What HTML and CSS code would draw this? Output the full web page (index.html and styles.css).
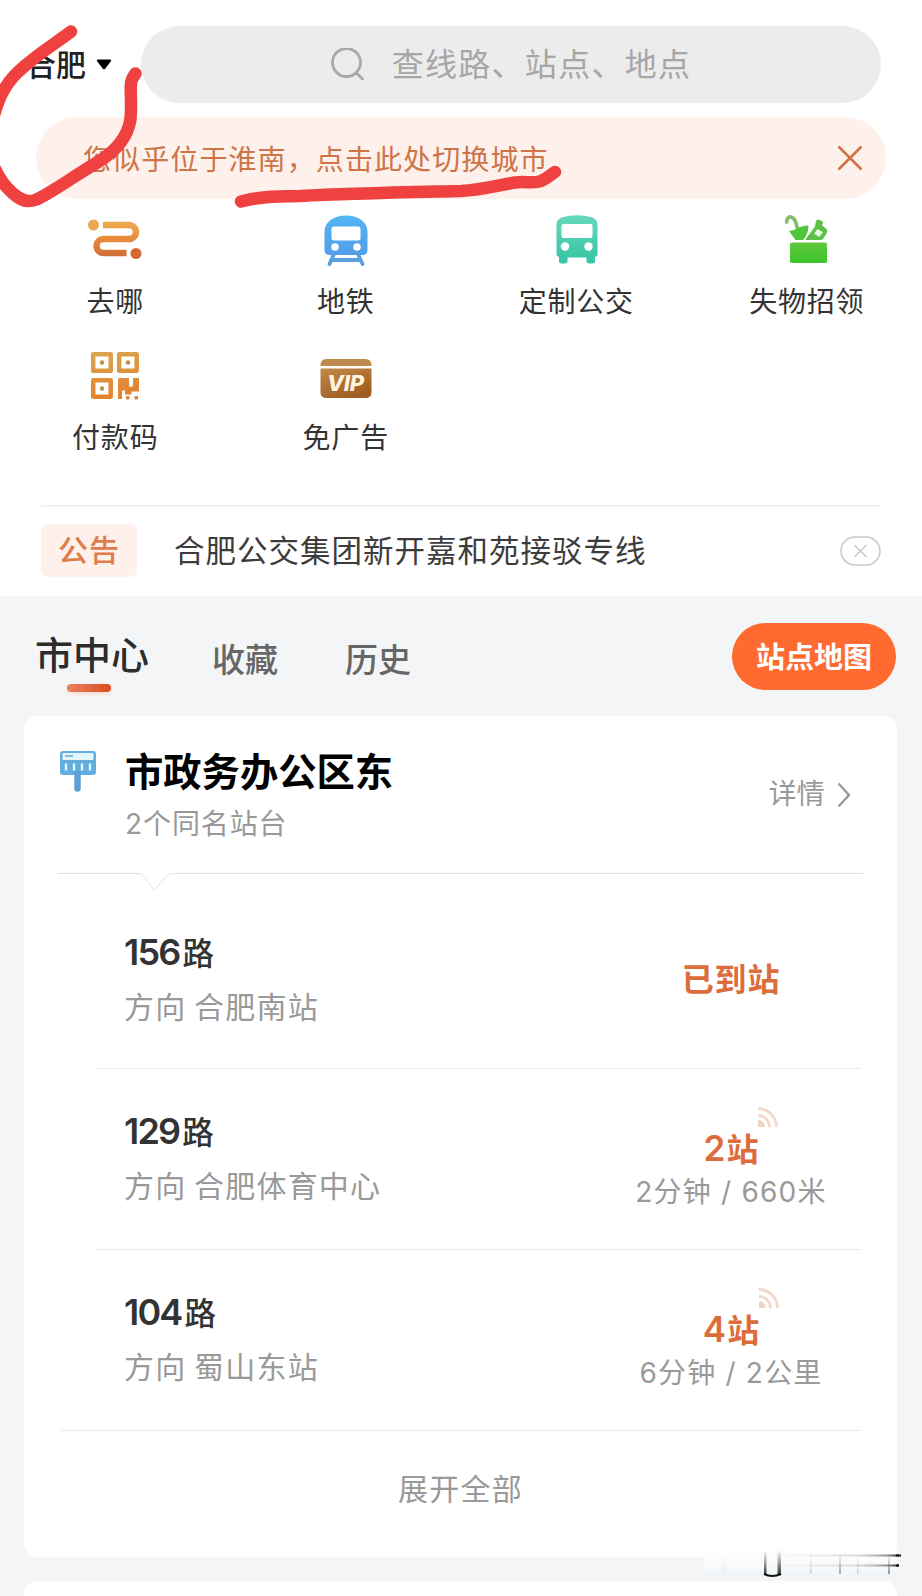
FILE: index.html
```html
<!DOCTYPE html>
<html lang="zh-CN">
<head>
  <meta charset="UTF-8">
  <meta name="viewport" content="width=device-width, initial-scale=1.0">
  <title>合肥公交</title>
  <link rel="stylesheet" href="styles.css">
</head>
<body>
  <div class="top">
    <header class="header">
      <div class="city">合肥 <svg width="16" height="11" viewBox="0 0 16 11"><path d="M2 0.5h12q2 0 .8 1.700L9.200 9.700q-1.200 1.300-2.400 0L1.200 2.200Q0 .5 2 .5z" fill="#000"/></svg></div>
      <div class="search">
        <svg width="34" height="34" viewBox="0 0 34 34" fill="none" stroke="#a9a9a9" stroke-width="2.800"><circle cx="15.500" cy="14.500" r="14"/><path d="M25 24.500l6.500 6.500" stroke-linecap="round"/></svg>
        <span>查线路、站点、地点</span>
      </div>
    </header>

    <div class="location-tip">
      <span>您似乎位于淮南，点击此处切换城市</span>
      <svg width="26" height="26" viewBox="0 0 26 26" fill="none" stroke="#cf7347" stroke-width="2.600"><path d="M1.500 1.500l23 23M24.500 1.500l-23 23"/></svg>
    </div>

    <nav class="menu">
      <a class="menu-item">
        <svg class="menu-icon" viewBox="0 0 54 54">
          <defs><linearGradient id="route" x1="0" y1="6" x2="0" y2="44" gradientUnits="userSpaceOnUse"><stop offset="0" stop-color="#edb050"/><stop offset=".5" stop-color="#e98a3c"/><stop offset="1" stop-color="#cf6a38"/></linearGradient></defs>
          <circle cx="5.500" cy="11" r="5.500" fill="#eba951"/>
          <path d="M15 11h26a7 7 0 0 1 0 14H15.500a7 7 0 0 0 0 14H38.500" fill="none" stroke="url(#route)" stroke-width="6.500"/>
          <circle cx="48" cy="39.500" r="5.500" fill="#d76832"/>
        </svg>
        <span>去哪</span>
      </a>
      <a class="menu-item">
        <svg class="menu-icon" viewBox="0 0 54 54">
          <defs><linearGradient id="metro" x1="0" y1="0" x2="0" y2="1"><stop offset="0" stop-color="#52b5f2"/><stop offset="1" stop-color="#529ee8"/></linearGradient></defs>
          <path d="M5.500 17C6 7 16 1.500 27 1.500S48 7 48.500 17v19q0 5-5 5h-33q-5 0-5-5z" fill="url(#metro)"/>
          <rect x="12.500" y="12.500" width="29" height="14" rx="2.500" fill="#fff"/>
          <circle cx="16" cy="33" r="3.800" fill="#fff"/><circle cx="38" cy="33" r="3.800" fill="#fff"/>
          <path d="M15 40l-4.500 10M39 40l4.500 10M13 46h28" stroke="#5a9fdf" stroke-width="3.800" fill="none" stroke-linecap="round"/>
        </svg>
        <span>地铁</span>
      </a>
      <a class="menu-item">
        <svg class="menu-icon" viewBox="0 0 54 54">
          <defs><linearGradient id="bus" x1="0" y1="0" x2="0" y2="1"><stop offset="0" stop-color="#66d9bd"/><stop offset="1" stop-color="#34c4a4"/></linearGradient></defs>
          <path d="M7.500 9q1-4 5-5.500Q28-1 43.500 3.500 47.500 5 48.500 9v31q0 2.500-2.500 3v4q0 2.500-2.500 2.500h-3q-3 0-3-2.500v-3.500h-19V47q0 2.500-3 2.500h-3Q10 49.500 10 47v-4q-2.500-.500-2.500-3z" fill="url(#bus)"/>
          <rect x="12.500" y="10" width="31" height="14" rx="2" fill="#fff"/>
          <circle cx="16" cy="32.500" r="4.200" fill="#fff"/><circle cx="39.500" cy="32.500" r="4.200" fill="#fff"/>
        </svg>
        <span>定制公交</span>
      </a>
      <a class="menu-item">
        <svg class="menu-icon" viewBox="0 0 54 54">
          <defs><linearGradient id="box" x1="0" y1="0" x2="0" y2="1"><stop offset="0" stop-color="#62c83c"/><stop offset="1" stop-color="#3bc42b"/></linearGradient></defs>
          <path d="M7 9.500C5.500 4 10 1.500 13 4c3 2.500 3.500 6 4.500 11" fill="none" stroke="#83bd6b" stroke-width="3.600"/>
          <path d="M9 17q5 0 9-3 4-2.500 10.500-2.500Q28.500 20 23 26h-7.500z" fill="#51c53a"/>
          <path d="M25 26l10-13.500 1-5.500q1-2 3-1.300l3 1.200q1.500.8.800 2.600l-.8 2 4 3q2 2 .5 5l-3.500 5.500q-1 1-2.500 1z" fill="#5cc246"/>
          <path d="M37.500 15l5.500 3.200-3.800 4.800-5-3.200z" fill="#e6f8df"/>
          <rect x="10" y="28.500" width="37" height="20.500" rx="2" fill="url(#box)"/>
        </svg>
        <span>失物招领</span>
      </a>
      <a class="menu-item">
        <svg class="menu-icon" viewBox="0 0 54 54">
          <defs><linearGradient id="qr" x1="0" y1="3" x2="10" y2="51" gradientUnits="userSpaceOnUse"><stop offset="0" stop-color="#d8a64e"/><stop offset="1" stop-color="#e5812f"/></linearGradient></defs>
          <g fill="none" stroke="url(#qr)" stroke-width="4.500" stroke-linejoin="round"><rect x="5.200" y="4.200" width="17.500" height="16.500"/><rect x="31.200" y="4.200" width="17.500" height="16.500"/><rect x="5.200" y="30.200" width="17.500" height="16.500"/></g>
          <g fill="#c39146"><circle cx="14" cy="12.500" r="2.300"/><circle cx="40" cy="12.500" r="2.300"/><circle cx="14" cy="38.500" r="2.300"/></g>
          <path d="M31 28h10v7q0 2 2 2t2-2v-7h6v13.500h-7.500v3H37v-4h-3V49h-4V30q0-2 1-2z" fill="url(#qr)"/>
          <path d="M38 46h3.500v3.500H38zM46.500 46H50v3.500h-3.500z" fill="#dc8a3d"/>
        </svg>
        <span>付款码</span>
      </a>
      <a class="menu-item">
        <svg class="menu-icon" viewBox="0 0 54 54">
          <defs><linearGradient id="vip" x1="0" y1="0" x2=".6" y2="1"><stop offset="0" stop-color="#c18a48"/><stop offset="1" stop-color="#a05c22"/></linearGradient></defs>
          <path d="M1.500 16V15q0-6 6-6h39q6 0 6 6v1z" fill="#bf8b4c"/>
          <path d="M1.500 18.500h51V42q0 6-6 6h-39q-6 0-6-6z" fill="url(#vip)"/>
          <text x="27" y="41" text-anchor="middle" textLength="38" class="vip-text">VIP</text>
        </svg>
        <span>免广告</span>
      </a>
    </nav>

    <div class="notice">
      <span class="notice-tag">公告</span>
      <span class="notice-text">合肥公交集团新开嘉和苑接驳专线</span>
      <svg width="41" height="30" viewBox="0 0 41 30" fill="none" stroke="#c9c9c9" stroke-width="1.500"><rect x="1" y="1" width="39" height="28" rx="14"/><path d="M14.500 9l12 12M26.500 9l-12 12"/></svg>
    </div>
  </div>

  <div class="tabs">
    <a class="tab active">市中心</a>
    <a class="tab">收藏</a>
    <a class="tab">历史</a>
    <button class="map-btn">站点地图</button>
  </div>

  <section class="card">
    <div class="station">
      <svg class="station-icon" width="38" height="42" viewBox="0 0 38 42">
        <rect x="1" y="1" width="36" height="24" rx="3" fill="#63aee0"/>
        <rect x="3.500" y="3" width="31" height="7" rx="1" fill="#e4f6fd"/>
        <path d="M6 6h8" stroke="#80bbe0" stroke-width="2"/>
        <path d="M7 13.500v7M15 13.500v7M23 13.500v7M31 13.500v7" stroke="#e4f6fd" stroke-width="2.400"/>
        <path d="M18.500 24v14.500" stroke="#609fd5" stroke-width="6.500" stroke-linecap="round"/>
      </svg>
      <div class="station-info">
        <h2>市政务办公区东</h2>
        <p>2个同名站台</p>
      </div>
      <a class="detail">详情 <svg width="14" height="26" viewBox="0 0 14 26" fill="none" stroke="#999" stroke-width="2.400"><path d="M1.500 1.500L12 13 1.500 24.500"/></svg></a>
    </div>
    <svg class="notch-line" width="805" height="20" viewBox="0 0 805 20" fill="none" stroke="#dfdfe1" stroke-width="1.200"><path d="M0 1.500h80M116 1.500h689"/><path d="M80 1.500q4 0 6 3l10.500 13.500L108 4.500q3-3 8-3" stroke="#ececee"/></svg>

    <div class="line">
      <div class="line-info">
        <h3><b>156</b>路</h3>
        <p>方向 合肥南站</p>
      </div>
      <div class="arrival"><strong class="arrived">已到站</strong></div>
    </div>
    <div class="line">
      <div class="line-info">
        <h3><b>129</b>路</h3>
        <p>方向 合肥体育中心</p>
      </div>
      <div class="arrival">
        <strong><b>2</b>站<svg class="signal" viewBox="0 0 20 20"><path d="M0 13a7 7 0 0 1 7 7H0z" fill="#f2d0c2"/><path d="M0 8.500A11.500 11.500 0 0 1 11.500 20M0 1.500A18.500 18.500 0 0 1 18.500 20" fill="none" stroke="#f2d8cc" stroke-width="2.800"/></svg></strong>
        <p>2分钟 / 660米</p>
      </div>
    </div>
    <div class="line">
      <div class="line-info">
        <h3><b>104</b>路</h3>
        <p>方向 蜀山东站</p>
      </div>
      <div class="arrival">
        <strong><b>4</b>站<svg class="signal" viewBox="0 0 20 20"><path d="M0 13a7 7 0 0 1 7 7H0z" fill="#f2d0c2"/><path d="M0 8.500A11.500 11.500 0 0 1 11.500 20M0 1.500A18.500 18.500 0 0 1 18.500 20" fill="none" stroke="#f2d8cc" stroke-width="2.800"/></svg></strong>
        <p>6分钟 / 2公里</p>
      </div>
    </div>
    <a class="expand">展开全部</a>
  </section>

  <section class="next-card"></section>

  <!-- red pen marks over the header -->
  <svg class="marks" width="922" height="220" viewBox="0 0 922 220" fill="none" stroke="#ee4140" stroke-width="12.500" stroke-linecap="round" stroke-linejoin="round">
    <path d="M71 31.500C55 44 31 58 14 76C4 87-1 98-6 115C-16 150-8 168 4 184C14 196 24 204 35 200C48 195 74 176 98 162C116 151 128 136 130.500 119C132 104 130 91 131 84C131 80 133 77 135.500 73.500"/>
    <path d="M241 201.500C258 197 272 196.500 300 196C350 193.500 400 192.500 461 191C480 190 500 185 515 182.500C526 181 533 184 541 181C548 178 550 175 555 172"/>
  </svg>

  <!-- smeared corner mark -->
  <svg class="smear" width="200" height="32" viewBox="0 0 200 32">
    <defs>
      <linearGradient id="fadeX"><stop offset="0" stop-color="#ccc" stop-opacity="0"/><stop offset=".7" stop-color="#aaa" stop-opacity=".4"/><stop offset=".92" stop-color="#777" stop-opacity=".8"/><stop offset="1" stop-color="#222"/></linearGradient>
      <linearGradient id="fadeY" x1="0" y1="0" x2="0" y2="1"><stop offset="0" stop-color="#555" stop-opacity="0"/><stop offset="1" stop-color="#333"/></linearGradient>
      <linearGradient id="haze" x1="0" y1="0" x2="0" y2="1"><stop offset="0" stop-color="#fefefe"/><stop offset="1" stop-color="#f1f5f8"/></linearGradient>
    </defs>
    <rect x="0" y="3" width="193" height="26" fill="url(#haze)"/>
    <rect x="58" y="6.500" width="137" height="2" fill="url(#fadeX)"/><rect x="58" y="16.500" width="137" height="2" fill="url(#fadeX)"/>
    <rect x="60" y="2" width="2.500" height="25" fill="url(#fadeY)"/><rect x="73.500" y="2" width="3.500" height="25" fill="url(#fadeY)"/>
    <path d="M60 26q8 4 17 0" fill="none" stroke="#111" stroke-width="2.200"/>
    <g fill="url(#fadeY)"><rect x="106" y="4" width="1.500" height="22" opacity=".2"/><rect x="135" y="4" width="2" height="22" opacity=".4"/><rect x="153" y="4" width="1.500" height="22" opacity=".2"/><rect x="184" y="4" width="2" height="22" opacity=".5"/><rect x="19" y="4" width="2" height="22" opacity=".06"/></g>
    <rect x="192" y="6.500" width="5" height="2" fill="#111"/><rect x="192" y="16.200" width="3" height="2.500" rx="1" fill="#111"/>
  </svg>
</body>
</html>
```

FILE: styles.css
```css
* {
  box-sizing: border-box;
}
body {
  position: relative;
  margin: 0;
  height: 1596px;
  overflow: hidden;
  background-color: #f3f5f7;
  color: #333;
  font-family: Inter, "Noto Sans CJK SC", sans-serif;
  line-height: 1.2;
}
h2, h3, p {
  margin: 0;
}
svg {
  display: block;
  flex: none;
}
.top {
  height: 596px;
  padding-top: 26px;
  background-color: #fff;
}
.header {
  display: flex;
  align-items: center;
  height: 77px;
  padding-left: 26px;
}
.city {
  display: flex;
  align-items: center;
  gap: 10px;
  width: 115px;
  font-size: 30px;
  font-weight: 500;
  color: #222;
}
.search {
  display: flex;
  align-items: center;
  justify-content: center;
  gap: 27px;
  width: 740px;
  height: 77px;
  border-radius: 39px;
  background-color: #ececec;
  color: #a6a6a6;
  font-size: 32px;
  letter-spacing: 1.3px;
}
.search span {
  padding-top: 2px;
}
.location-tip {
  display: flex;
  align-items: center;
  justify-content: space-between;
  height: 82px;
  margin: 14px 36px 0;
  padding: 0 23px 0 47px;
  border-radius: 41px;
  background-color: #fef0eb;
  color: #cd7448;
  font-size: 28px;
  letter-spacing: 1.1px;
}
.location-tip span {
  padding-top: 5px;
}
.menu {
  display: grid;
  grid-template-columns: repeat(4, 1fr);
  grid-auto-rows: 136px;
  margin-top: 15px;
}
.menu-item {
  display: flex;
  flex-direction: column;
  align-items: center;
  gap: 18px;
  font-size: 28px;
  letter-spacing: 0.8px;
  color: #333;
}
.menu-icon {
  width: 54px;
  height: 54px;
}
.vip-text {
  font: italic 800 22px Inter, sans-serif;
  fill: #fff3dc;
}
.notice {
  display: flex;
  align-items: center;
  height: 91px;
  margin: 19px 41px 0;
  padding-bottom: 2px;
  border-top: 2px solid #eef0f4;
}
.notice-tag {
  width: 96px;
  height: 53px;
  border-radius: 7px;
  background-color: #fef0ea;
  color: #df7c4c;
  font-size: 30px;
  font-weight: 500;
  letter-spacing: 1px;
  line-height: 53px;
  text-align: center;
}
.notice-text {
  flex: 1;
  padding: 2px 0 0 37px;
  font-size: 30.5px;
  letter-spacing: 1px;
  color: #3c3c3c;
}
.tabs {
  display: flex;
  align-items: center;
  height: 120px;
  padding: 0 26px 0 35px;
}
.tab {
  padding-top: 10px;
  margin-right: 67px;
  font-size: 33px;
  font-weight: 500;
  color: #666;
}
.tab.active {
  position: relative;
  padding-top: 0;
  margin-right: 63px;
  font-size: 38px;
  color: #2c2c2c;
}
.tab.active::after {
  content: "";
  position: absolute;
  left: 32px;
  bottom: -13px;
  width: 44px;
  height: 8px;
  border-radius: 4px;
  background: linear-gradient(90deg, #e5835f, #df4a22);
  box-shadow: 0 2px 4px #fbd9cc;
}
.map-btn {
  width: 164px;
  height: 67px;
  margin-left: auto;
  padding: 0 0 3px;
  border: none;
  border-radius: 34px;
  background-color: #fe6a30;
  color: #fff;
  font-family: inherit;
  font-size: 29px;
  font-weight: 600;
}
.card {
  height: 841px;
  margin: 0 25px 0 24px;
  border-radius: 13px;
  background-color: #fff;
}
.next-card {
  height: 15px;
  margin: 24px 25px 0 24px;
  border-radius: 13px 13px 0 0;
  background-color: #fff;
}
.station {
  display: flex;
  height: 156px;
  padding: 34px 46px 0 35px;
}
.station-info {
  flex: 1;
  padding-left: 28px;
}
.station-info h2 {
  font-size: 38.3px;
  font-weight: 600;
  line-height: 44px;
  color: #000;
}
.station-info p {
  margin-top: 13px;
  font-size: 28px;
  letter-spacing: 0.9px;
  line-height: 34px;
  color: #999;
}
.detail {
  display: flex;
  align-items: center;
  gap: 12px;
  height: 90px;
  font-size: 28px;
  letter-spacing: 0.3px;
  color: #999;
}
.notch-line {
  margin-left: 34px;
}
.line {
  display: flex;
  height: 181px;
  margin: 0 36px 0 72px;
  padding-left: 28px;
  border-bottom: 1px solid #ebebed;
}
.notch-line + .line {
  height: 177px;
}
.line:nth-of-type(4) {
  margin-left: 36px;
  padding-left: 64px;
}
.line-info {
  flex: 1;
  align-self: flex-end;
  height: 138px;
}
.notch-line + .line .line-info {
  height: 136px;
}
.line h3 {
  font-size: 31.5px;
  font-weight: 500;
  line-height: 40px;
  color: #333;
}
.line h3 b {
  margin-right: 3px;
  font-size: 36px;
  font-weight: 600;
  letter-spacing: -1.8px;
}
.line p {
  color: #999;
}
.line-info p {
  margin-top: 15px;
  font-size: 30px;
  letter-spacing: 1.2px;
  line-height: 36px;
  word-spacing: -2px;
}
.arrival {
  align-self: flex-end;
  width: 260px;
  height: 121px;
  text-align: center;
}
.arrival strong {
  display: inline-block;
  position: relative;
  font-size: 32px;
  font-weight: 600;
  line-height: 40px;
  color: #dd6c3c;
}
.arrival strong b {
  margin-right: 1px;
  font-size: 35px;
  font-weight: 600;
}
.arrival p {
  margin-top: 4px;
  font-size: 28px;
  letter-spacing: 1.2px;
  line-height: 36px;
}
.arrival .arrived {
  margin-top: 13px;
  letter-spacing: 0.9px;
}
.signal {
  position: absolute;
  left: 100%;
  top: -21px;
  width: 20px;
  height: 20px;
}
.expand {
  display: block;
  padding-top: 40px;
  font-size: 30px;
  letter-spacing: 1.2px;
  text-align: center;
  color: #999;
}
.marks {
  position: absolute;
  left: 0;
  top: 0;
}
.smear {
  position: absolute;
  left: 704px;
  top: 1548px;
}
```
